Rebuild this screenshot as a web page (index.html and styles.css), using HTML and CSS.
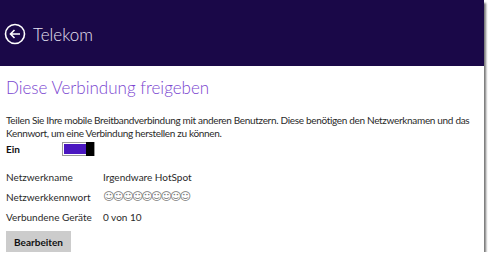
FILE: index.html
```html
<!DOCTYPE html>
<html lang="de">
<head>
    <meta charset="UTF-8">
    <title>Telekom</title>
    <link rel="stylesheet" href="styles.css">
</head>
<body>
    <div class="window">
        <div class="header">
            <svg class="back" width="22" height="22" viewBox="0 0 22 22">
                <circle cx="11" cy="11" r="9.5" fill="none" stroke="#fff" stroke-width="1.6"/>
                <path d="M16 11H6.5M10.5 7L6.5 11L10.5 15" fill="none" stroke="#fff" stroke-width="1.6"/>
            </svg>
            <span class="app-title">Telekom</span>
        </div>
        <div class="content">
            <h1>Diese Verbindung freigeben</h1>
            <p class="desc">Teilen Sie Ihre mobile Breitbandverbindung mit anderen Benutzern. Diese benötigen den Netzwerknamen und das Kennwort, um eine Verbindung herstellen zu können.</p>
            <div class="toggle-row">
                <span class="toggle-label">Ein</span>
                <span class="toggle"><span class="fill"></span><span class="thumb"></span></span>
            </div>
            <div class="info">
                <span>Netzwerkname</span><span>Irgendware HotSpot</span>
                <span>Netzwerkkennwort</span><span class="pw">☺☺☺☺☺☺☺☺☺</span>
                <span>Verbundene Geräte</span><span>0 von 10</span>
            </div>
            <button>Bearbeiten</button>
        </div>
    </div>
</body>
</html>
```

FILE: styles.css
```css
body {
    margin: 0;
    background: #fff;
    font-family: Lato, "Open Sans", sans-serif;
    color: #2a2a2a;
}
.window {
    width: 484px;
    height: 252px;
    background: #fff;
    box-shadow: 2px 3px 2px #777;
    overflow: hidden;
}
.header {
    height: 66px;
    background: #1a0848;
    display: flex;
    align-items: center;
    padding-left: 4px;
    gap: 7px;
    box-sizing: border-box;
    padding-top: 2px;
}
.app-title {
    color: #e8e4f4;
    font-size: 17px;
    font-weight: 300;
}
.content {
    padding: 0 6px;
}
h1 {
    margin: 10px 0 0;
    font-size: 17px;
    font-weight: 300;
    color: #7a45d0;
    line-height: 24px;
}
.desc {
    margin: 14px 0 0;
    font-size: 10px;
    line-height: 13px;
    letter-spacing: -0.32px;
}
.toggle-row {
    display: flex;
    align-items: center;
    margin-top: 1px;
    height: 15px;
}
.toggle-label {
    width: 56px;
    font-size: 10px;
    font-weight: 700;
    color: #111;
}
.toggle {
    display: flex;
    width: 33px;
    height: 14px;
    border: 1px solid #999;
    box-sizing: border-box;
    padding: 1px 0 1px 1px;
}
.fill {
    flex: 1;
    background: #4a17c0;
}
.thumb {
    width: 8px;
    margin: -2px 0;
    background: #000;
}
.info {
    display: grid;
    grid-template-columns: 97px auto;
    row-gap: 6px;
    margin-top: 14px;
    font-size: 10px;
    line-height: 14px;
}
.pw {
    font-family: "DejaVu Sans", sans-serif;
    font-size: 11px;
    color: #777;
    letter-spacing: -1.9px;
}
button {
    margin-top: 7px;
    width: 65px;
    height: 21px;
    border: none;
    background: #ccc;
    font-family: Lato, "Open Sans", sans-serif;
    font-weight: 700;
    font-size: 10px;
    color: #111;
    padding: 0;
}
```
